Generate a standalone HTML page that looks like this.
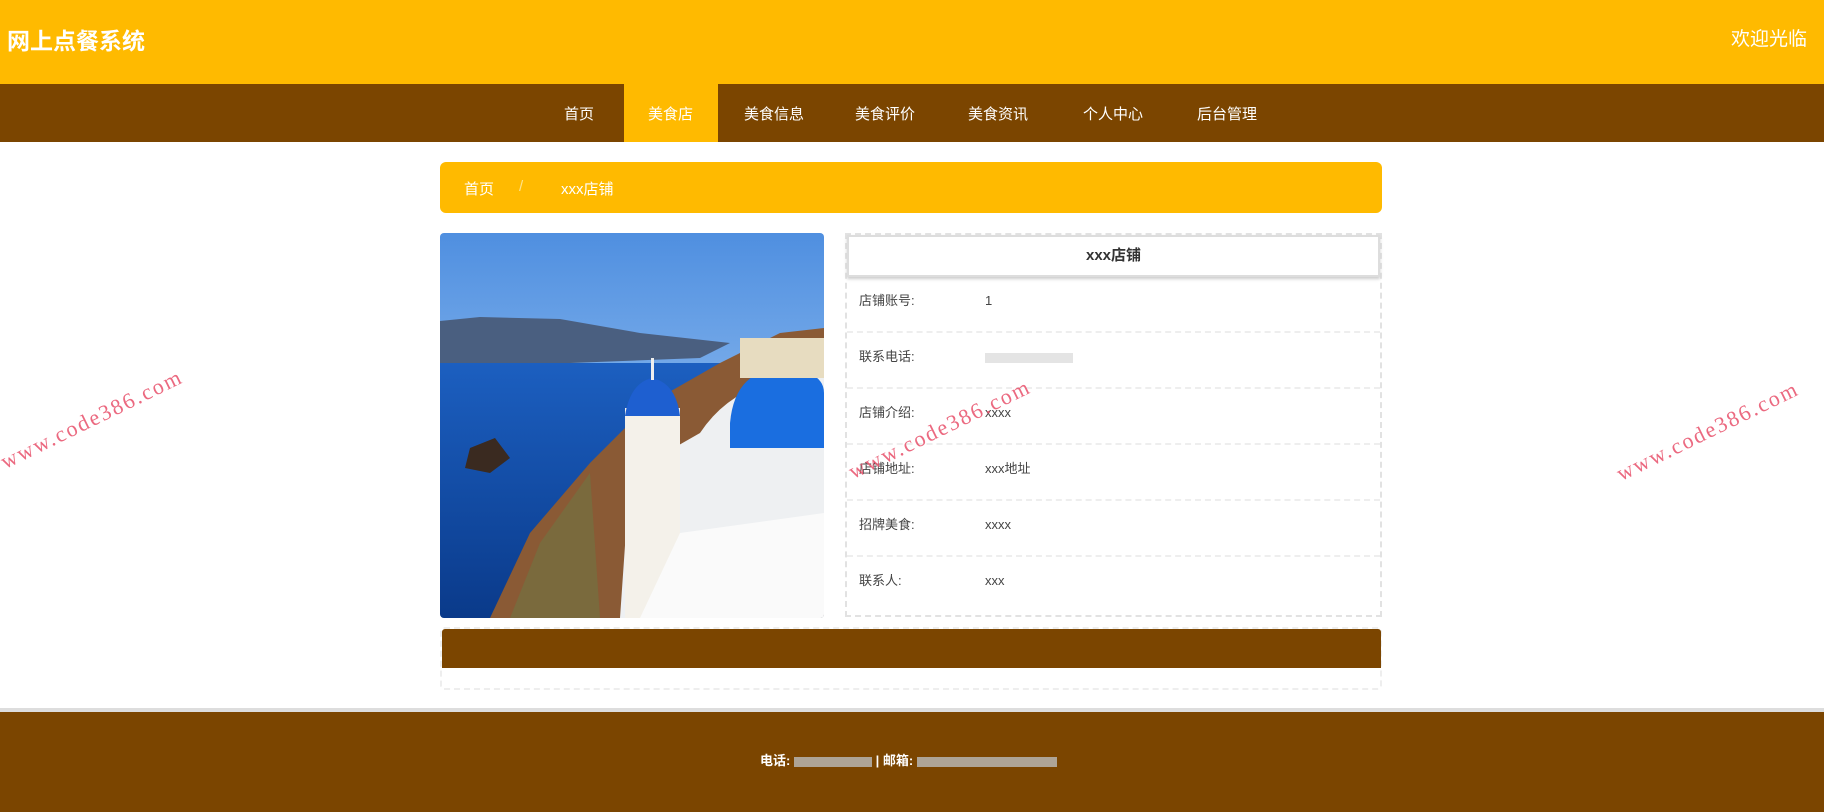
<!DOCTYPE html>
<html><head><meta charset="utf-8"><style>
*{margin:0;padding:0;box-sizing:border-box}
body{width:1824px;height:812px;overflow:hidden;background:#fff;font-family:"Liberation Sans","Noto Sans CJK SC",sans-serif;position:relative}
.hdr{position:absolute;left:0;top:0;width:1824px;height:84px;background:#FFBA00}
.hdr .t{position:absolute;left:7px;top:22px;font-size:23px;color:#fff;font-weight:bold}
.hdr .w{position:absolute;right:17px;top:24px;font-size:19px;color:#fff}
.nav{position:absolute;left:0;top:84px;width:1824px;height:58px;background:#7B4500}
.nav span{position:absolute;top:19px;font-size:15px;color:#fff}
.act{position:absolute;left:624px;top:84px;width:94px;height:58px;background:#FFBA00}
.bc{position:absolute;left:440px;top:162px;width:942px;height:51px;background:#FFBA00;border-radius:6px;color:#fff;font-size:15px}
.bc span{position:absolute;top:16px}
.img{position:absolute;left:440px;top:233px;width:384px;height:385px;border-radius:4px;overflow:hidden}
.info{position:absolute;left:845px;top:233px;width:537px;height:384px;border:2px dashed #e2e2e2}
.info .h{height:42px;border:2px solid #ddd;box-shadow:0 2px 3px #ccc;text-align:center;line-height:38px;font-size:15px;font-weight:bold;color:#333;background:#fff}
.row{height:56px;border-bottom:2px dashed #eee;position:relative;font-size:13px;color:#444;line-height:20px}
.row .l{position:absolute;left:12px;top:14px}
.row .v{position:absolute;left:138px;top:14px}
.bar{position:absolute;left:442px;top:629px;width:939px;height:39px;background:#7B4500;border-radius:3px 3px 0 0}
.box2{position:absolute;left:440px;top:627px;width:942px;height:63px;border:2px dashed #eee;border-radius:4px}
.ftl{position:absolute;left:0;top:708px;width:1824px;height:4px;background:#ddd}
.ft{position:absolute;left:0;top:712px;width:1824px;height:100px;background:#7B4500;color:#fff;font-size:13px;font-weight:bold}
.blur{display:inline-block;width:78px;height:10px;background:#bbb;vertical-align:middle;opacity:.8}
.wm{position:absolute;color:#e8506a;font-family:"Liberation Serif",serif;font-size:22px;letter-spacing:2px;transform:rotate(-26deg);transform-origin:left center;opacity:.85;white-space:nowrap}
</style></head><body>
<div class="hdr"><div class="t">网上点餐系统</div><div class="w">欢迎光临</div></div>
<div class="nav"></div><div class="act"></div>
<div class="nav" style="background:transparent">
<span style="left:564px">首页</span><span style="left:648px">美食店</span><span style="left:744px">美食信息</span><span style="left:855px">美食评价</span><span style="left:968px">美食资讯</span><span style="left:1083px">个人中心</span><span style="left:1197px">后台管理</span></div>
<div class="bc"><span style="left:24px">首页</span><span style="left:79px;color:#ffe38a">/</span><span style="left:121px">xxx店铺</span></div>
<div class="img"><svg width="384" height="385" viewBox="0 0 384 385">
<defs><linearGradient id="s" x1="0" y1="0" x2="0" y2="1"><stop offset="0" stop-color="#4f8fe0"/><stop offset="1" stop-color="#b8d8f8"/></linearGradient>
<linearGradient id="sea" x1="0" y1="0" x2="0" y2="1"><stop offset="0" stop-color="#1c5fc0"/><stop offset="1" stop-color="#0a3a8a"/></linearGradient></defs>
<rect width="384" height="385" fill="url(#s)"/>
<path d="M0 88 L40 84 L120 86 L200 100 L290 110 L260 125 L0 135Z" fill="#4a5f80"/>
<rect y="130" width="384" height="255" fill="url(#sea)"/>
<path d="M30 215 L55 205 L70 225 L50 240 L25 235Z" fill="#3a2a20"/>
<path d="M384 95 L340 100 L280 130 L210 170 L150 230 L90 300 L50 385 L384 385Z" fill="#8a5a35"/>
<path d="M150 240 L100 310 L70 385 L160 385Z" fill="#6a7a45" opacity=".5"/>
<path d="M260 200 Q300 140 384 145 L384 385 L180 385 L190 240Z" fill="#eef0f2"/>
<path d="M290 190 Q295 135 345 135 Q384 138 384 160 L384 215 L290 215Z" fill="#1a6ee0"/>
<rect x="185" y="175" width="55" height="210" fill="#f4f1ea"/>
<path d="M185 183 Q190 150 212 145 Q236 150 240 183Z" fill="#1e5fd0"/>
<rect x="211" y="125" width="3" height="22" fill="#eee"/>
<path d="M240 300 L384 280 L384 385 L200 385Z" fill="#fafafa"/>
<rect x="300" y="105" width="84" height="40" fill="#e7dcc0"/>
</svg></div>
<div class="info"><div class="h">xxx店铺</div>
<div class="row"><span class="l">店铺账号:</span><span class="v">1</span></div>
<div class="row"><span class="l">联系电话:</span><span class="v"><span class="blur" style="width:88px;background:#ddd"></span></span></div>
<div class="row"><span class="l">店铺介绍:</span><span class="v">xxxx</span></div>
<div class="row"><span class="l">店铺地址:</span><span class="v">xxx地址</span></div>
<div class="row"><span class="l">招牌美食:</span><span class="v">xxxx</span></div>
<div class="row" style="border-bottom:none"><span class="l">联系人:</span><span class="v">xxx</span></div>
</div>
<div class="box2"></div><div class="bar"></div>
<div class="ftl"></div>
<div class="ft"><div style="position:absolute;left:760px;top:38px">电话: <span class="blur"></span> | 邮箱: <span class="blur" style="width:140px"></span></div></div>
<div class="wm" style="left:2px;top:450px">www.code386.com</div>
<div class="wm" style="left:850px;top:460px">www.code386.com</div>
<div class="wm" style="left:1618px;top:462px">www.code386.com</div>
</body></html>
